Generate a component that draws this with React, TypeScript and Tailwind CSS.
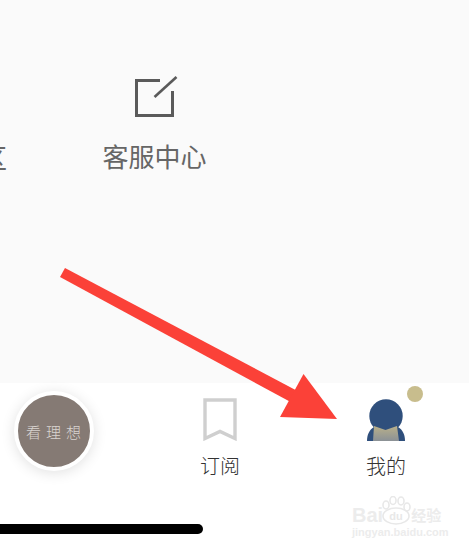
import React from 'react';

const cjk = '[font-family:"Noto_Sans_CJK_SC","Noto_Sans",sans-serif]';

function NavItem({ label, children }: { label: string; children: React.ReactNode }) {
  return (
    <div className="w-[166px] shrink-0 flex flex-col items-center">
      <div className="h-[45px] flex items-end justify-center">{children}</div>
      <span className="mt-[12px] text-[20px] leading-[26px] font-light text-[#333]">{label}</span>
    </div>
  );
}

export default function App() {
  return (
    <div className={`relative w-[469px] h-[550px] overflow-hidden bg-white ${cjk}`}>
      {/* top grid */}
      <div className="h-[383px] bg-[#fafafa] overflow-hidden pt-[75px]">
        <div className="flex -ml-[32px]">
          <div className="w-[39px] shrink-0 pt-[65px] flex justify-end">
            <span className="block text-[26px] leading-[34px] text-[#666] whitespace-nowrap">区</span>
          </div>
          <div className="ml-[96px] w-[103px] shrink-0 flex flex-col items-center">
            <svg className="overflow-visible" width="42" height="43" viewBox="0 0 42 43" fill="none" stroke="#5a5a5a" strokeWidth="3">
              <path d="M26 5.5H2.5V40.5H38.5V16" />
              <path d="M20.5 22L42.5 2" strokeWidth="2.6" />
            </svg>
            <span className="mt-[21px] text-[26px] leading-[34px] text-[#666] whitespace-nowrap">客服中心</span>
          </div>
        </div>
      </div>

      {/* bottom nav */}
      <div className="h-[167px] bg-white flex flex-col">
        <div className="flex -ml-[29px] pt-[13px]">
          <div className="w-[166px] shrink-0 flex justify-center">
            <div className="w-[80px] h-[80px] -mt-[5px] -ml-[1px] rounded-full bg-[#857a74] border-[4px] border-white shadow-[0_2px_14px_rgba(0,0,0,0.12)] flex items-center justify-center">
              <span className="text-[15px] leading-none text-[#d9d4d0] tracking-[5px] pl-[5px] font-light whitespace-nowrap">看理想</span>
            </div>
          </div>
          <NavItem label="订阅">
            <svg width="34" height="43" viewBox="0 0 34 43" fill="none" stroke="#cfcfcf" strokeWidth="3.4">
              <path d="M2 2H32V40.5L17 33.5L2 40.5Z" />
            </svg>
          </NavItem>
          <NavItem label="我的">
            <div className="relative w-[40px] h-[42px]">
              <svg width="40" height="42" viewBox="0 0 40 42">
                <defs>
                  <linearGradient id="chest" x1="0" y1="0" x2="0" y2="1">
                    <stop offset="0" stopColor="#b9b08a" />
                    <stop offset="1" stopColor="#8b9196" />
                  </linearGradient>
                </defs>
                <path d="M1 42C1 36 3 31 8 28H32C37 31 39 36 39 42Z" fill="#2f4f7c" />
                <circle cx="20" cy="17" r="16.7" fill="#2f4f7c" />
                <path d="M8 27L19.5 31L31 27L33 42H7Z" fill="url(#chest)" />
              </svg>
              <div className="absolute -top-[13px] left-[41px] w-[16px] h-[16px] rounded-full bg-[#c8bd8d]" />
            </div>
          </NavItem>
        </div>
        <div className="mt-auto mb-[16px] w-[203px] h-[10px] bg-black rounded-r-full" />
      </div>

      {/* red arrow annotation */}
      <svg className="absolute left-0 top-0" width="469" height="550" viewBox="0 0 469 550">
        <path d="M60 277L65 268L305 395L298 406Z" fill="#fb4138" />
        <path d="M303.5 374L337 419L280 417Z" fill="#fb4138" />
      </svg>

      {/* watermark */}
      <div className="absolute left-[352px] top-[496px] w-[90px] flex flex-col text-[#ececec]">
        <div className="relative flex items-end h-[29px] font-['Liberation_Sans',sans-serif] text-[20px] leading-[20px] font-bold">
          <span>Bai</span>
          <svg className="absolute left-[29px] top-0" width="30" height="29" viewBox="0 0 30 29" fill="none" stroke="#e8e8e8" strokeWidth="1.6">
            <ellipse cx="15" cy="20" rx="13" ry="8" />
            <ellipse cx="5" cy="9" rx="3" ry="4" />
            <ellipse cx="12" cy="4.5" rx="3" ry="4" />
            <ellipse cx="20" cy="5" rx="3" ry="4" />
            <ellipse cx="26" cy="11" rx="3" ry="4" />
            <text x="15" y="24" textAnchor="middle" fontSize="11" fontWeight="700" fill="#e8e8e8" stroke="none">du</text>
          </svg>
          <span className={`ml-[28px] text-[15px] ${cjk}`}>经验</span>
        </div>
        <span className="font-['Liberation_Sans',sans-serif] text-[11px] leading-[12px] mt-[1px] font-bold whitespace-nowrap">jingyan.baidu.com</span>
      </div>
    </div>
  );
}
